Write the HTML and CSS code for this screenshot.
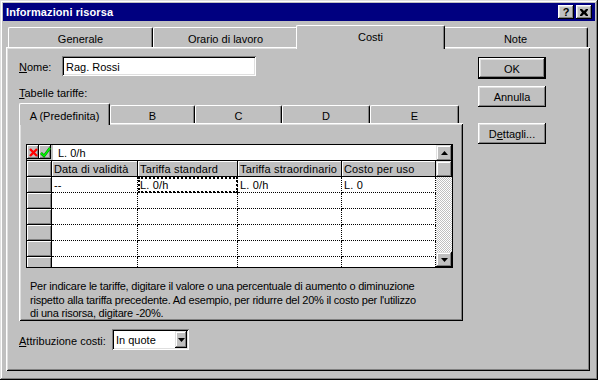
FILE: index.html
```html
<!DOCTYPE html>
<html lang="it">
<head>
<meta charset="utf-8">
<title>Informazioni risorsa</title>
<link rel="stylesheet" href="styles.css">
</head>
<body>
<div class="window">
  <div class="titlebar">
    <span class="title">Informazioni risorsa</span>
    <span class="tb-btn tb-help">?</span>
    <span class="tb-btn tb-close">
      <svg width="8" height="7" viewBox="0 0 8 7"><path d="M0 0h2l2 2 2-2h2v1l-2 2.5 2 2.5v1h-2l-2-2-2 2h-2v-1l2-2.5-2-2.5z" fill="#000"/></svg>
    </span>
  </div>

  <div class="main-tabs">
    <div class="tab main-tab">Generale</div>
    <div class="tab main-tab">Orario di lavoro</div>
    <div class="tab main-tab active">Costi</div>
    <div class="tab main-tab">Note</div>
  </div>

  <div class="page">
    <div class="left">
      <div class="name-row">
        <span class="name-label"><u>N</u>ome:</span>
        <div class="textbox">Rag. Rossi</div>
      </div>
      <div class="section-label"><u>T</u>abelle tariffe:</div>

      <div class="inner-tabs">
        <div class="tab itab itab-a active">A (Predefinita)</div>
        <div class="tab itab itab-b">B</div>
        <div class="tab itab itab-c">C</div>
        <div class="tab itab itab-d">D</div>
        <div class="tab itab itab-e">E</div>
      </div>

      <div class="ipanel">
        <div class="grid">
          <div class="gmain">
            <div class="entry-bar">
              <span class="eb-btn">
                <svg width="9" height="9" viewBox="0 0 9 9"><path d="M1 1l7 7M8 1l-7 7" stroke="#ff0000" stroke-width="2.4"/></svg>
              </span>
              <span class="eb-btn">
                <svg width="11" height="11" viewBox="0 0 11 11"><path d="M1 6l3 3 6-8" stroke="#008000" stroke-width="2.6" fill="none"/><path d="M1 6l3 3 6-8" stroke="#00ff00" stroke-width="1.4" fill="none"/></svg>
              </span>
              <div class="entry-input">L. 0/h</div>
            </div>
            <div class="grow ghead">
              <div class="rh corner"></div>
              <div class="hc c1">Data di validità</div>
              <div class="hc c2">Tariffa standard</div>
              <div class="hc c3">Tariffa straordinario</div>
              <div class="hc c4">Costo per uso</div>
            </div>
            <div class="grow">
              <div class="rh"></div>
              <div class="dc c1">--</div>
              <div class="dc c2 focus">L. 0/h</div>
              <div class="dc c3">L. 0/h</div>
              <div class="dc c4">L. 0</div>
            </div>
            <div class="grow"><div class="rh"></div><div class="dc c1"></div><div class="dc c2"></div><div class="dc c3"></div><div class="dc c4"></div></div>
            <div class="grow"><div class="rh"></div><div class="dc c1"></div><div class="dc c2"></div><div class="dc c3"></div><div class="dc c4"></div></div>
            <div class="grow"><div class="rh"></div><div class="dc c1"></div><div class="dc c2"></div><div class="dc c3"></div><div class="dc c4"></div></div>
            <div class="grow"><div class="rh"></div><div class="dc c1"></div><div class="dc c2"></div><div class="dc c3"></div><div class="dc c4"></div></div>
            <div class="grow"><div class="rh"></div><div class="dc c1"></div><div class="dc c2"></div><div class="dc c3"></div><div class="dc c4"></div></div>
          </div>
          <div class="scrollbar">
            <span class="sb-btn sb-up"><svg width="7" height="4" viewBox="0 0 7 4"><path d="M3.5 0L7 4H0z" fill="#000"/></svg></span>
            <span class="sb-thumb"></span>
            <span class="sb-track"></span>
            <span class="sb-btn sb-down"><svg width="7" height="4" viewBox="0 0 7 4"><path d="M0 0h7L3.5 4z" fill="#000"/></svg></span>
          </div>
        </div>
        <p class="help">Per indicare le tariffe, digitare il valore o una percentuale di aumento o diminuzione<br>rispetto alla tariffa precedente. Ad esempio, per ridurre del 20% il costo per l'utilizzo<br>di una risorsa, digitare -20%.</p>
      </div>

      <div class="cost-row">
        <span class="cost-label"><u>A</u>ttribuzione costi:</span>
        <div class="combo">
          <span class="combo-text">In quote</span>
          <span class="combo-btn"><svg width="7" height="4" viewBox="0 0 7 4"><path d="M0 0h7L3.5 4z" fill="#000"/></svg></span>
        </div>
      </div>
    </div>

    <div class="right">
      <div class="btn btn-default">OK</div>
      <div class="btn btn-cancel">Annulla</div>
      <div class="btn btn-details">D<u>e</u>ttagli...</div>
    </div>
  </div>
</div>
</body>
</html>
```

FILE: styles.css
```css
* { box-sizing: border-box; }
html, body { margin: 0; padding: 0; }
body {
  width: 598px;
  height: 380px;
  background: #c0c0c0;
  font-family: "Liberation Sans", Arial, sans-serif;
  font-size: 11px;
  color: #000;
}
u { text-decoration: underline; text-underline-offset: 1px; }

.window {
  width: 598px;
  height: 380px;
  padding: 3px;
  background: #c0c0c0;
  box-shadow: inset -1px -1px #000, inset 1px 1px #dfdfdf, inset -2px -2px #808080, inset 2px 2px #fff;
  display: flex;
  flex-direction: column;
}

/* title bar */
.titlebar {
  height: 18px;
  background: #000080;
  color: #fff;
  display: flex;
  align-items: center;
  padding: 0 3px 0 3px;
}
.title { flex: 1; font-weight: bold; font-size: 11px; letter-spacing: 0.1px; }
.tb-btn {
  width: 16px;
  height: 14px;
  background: #c0c0c0;
  color: #000;
  display: flex;
  align-items: center;
  justify-content: center;
  font-weight: bold;
  font-size: 11px;
  box-shadow: inset -1px -1px #000, inset 1px 1px #fff, inset -2px -2px #808080, inset 2px 2px #dfdfdf;
}
.tb-close { margin-left: 2px; }

/* generic tab */
.tab {
  background: #c0c0c0;
  border-top: 1px solid #fff;
  border-left: 1px solid #fff;
  border-right: 1px solid #000;
  border-radius: 2px 2px 0 0;
  box-shadow: inset -1px 0 #808080;
  display: flex;
  align-items: center;
  justify-content: center;
  white-space: nowrap;
}
.tab.active { position: relative; z-index: 1; }

/* main tabs */
.main-tabs {
  display: flex;
  align-items: flex-end;
  height: 22px;
  margin-top: 4px;
  padding-left: 5px;
}
.main-tab { width: 145px; height: 20px; padding-top: 2px; }
.main-tab.active { width: 149px; height: 24px; margin: 0 -2px -2px; padding-top: 0; padding-bottom: 1px; }

/* page */
.page {
  margin-left: 3px;
  width: 584px;
  height: 324px;
  padding: 9px 0 0 13px;
  display: flex;
  box-shadow: inset 1px 1px #fff, inset -1px -1px #000, inset 2px 2px #dfdfdf, inset -2px -2px #808080;
}
.left { width: 444px; display: flex; flex-direction: column; }
.right { width: 68px; margin-left: 15px; margin-top: 1px; display: flex; flex-direction: column; }

.name-row { display: flex; align-items: center; height: 20px; }
.name-label { width: 43px; padding-top: 1px; }
.textbox {
  width: 194px;
  height: 20px;
  background: #fff;
  padding: 1px 0 0 4px;
  display: flex;
  align-items: center;
  box-shadow: inset 1px 1px #808080, inset -1px -1px #fff, inset 2px 2px #000, inset -2px -2px #dfdfdf;
}
.section-label { margin-top: 11px; line-height: 13px; height: 13px; }

/* inner tabs */
.inner-tabs {
  display: flex;
  align-items: flex-end;
  height: 20px;
  margin-top: 3px;
}
.itab { height: 18px; padding-top: 3px; }
.itab.active { height: 22px; margin-bottom: -2px; padding-top: 2px; padding-bottom: 0; }
.itab-a { width: 91px; }
.itab-b { width: 85px; }
.itab-c { width: 87px; }
.itab-d { width: 88px; }
.itab-e { width: 89px; }

.ipanel {
  height: 198px;
  padding: 21px 0 0 7px;
  box-shadow: inset 1px 1px #fff, inset -1px -1px #000, inset 2px 2px #dfdfdf, inset -2px -2px #808080;
}

/* grid */
.grid {
  width: 427px;
  height: 124px;
  border: 1px solid #000;
  display: flex;
  background: #c0c0c0;
}
.gmain { width: 409px; overflow: hidden; display: flex; flex-direction: column; }
.entry-bar {
  height: 16px;
  flex: none;
  display: flex;
  border-bottom: 1px solid #000;
}
.eb-btn {
  width: 12px;
  height: 14px;
  display: flex;
  align-items: center;
  justify-content: center;
  box-shadow: inset -1px -1px #000, inset 1px 1px #fff, inset -2px -2px #808080;
}
.entry-input {
  flex: 1;
  margin-left: 2px;
  height: 15px;
  background: #fff;
  padding: 2px 0 0 5px;
  line-height: 13px;
}
.grow { display: flex; height: 16px; flex: none; }
.ghead { border-bottom: 1px solid #000; }
.rh {
  width: 25px;
  height: 16px;
  background: #c0c0c0;
  border-right: 1px solid #000;
  border-bottom: 1px solid #000;
  box-shadow: inset 1px 1px #fff, inset -1px -1px #808080;
}
.ghead .rh { height: 15px; border-bottom: none; }
.hc {
  height: 15px;
  line-height: 13px;
  padding: 2px 0 0 2px;
  border-right: 1px solid #000;
  box-shadow: inset 1px 1px #fff;
  white-space: nowrap;
  overflow: hidden;
  letter-spacing: 0.15px;
}
.dc {
  height: 16px;
  line-height: 13px;
  padding: 2px 0 0 2px;
  background: #fff;
  border-right: 1px dotted #000;
  border-bottom: 1px dotted #000;
  white-space: nowrap;
  letter-spacing: 0.15px;
}
.c1 { width: 86px; }
.c2 { width: 100px; }
.c3 { width: 104px; }
.c4 { width: 94px; }
.dc.focus { outline: 2px dotted #000; outline-offset: -2px; }

.scrollbar { width: 16px; display: flex; flex-direction: column; }
.sb-btn, .sb-thumb {
  width: 16px;
  height: 16px;
  flex: none;
  background: #c0c0c0;
  display: flex;
  align-items: center;
  justify-content: center;
  box-shadow: inset -1px -1px #000, inset 1px 1px #dfdfdf, inset -2px -2px #808080, inset 2px 2px #fff;
}
.sb-down { height: 15px; }
.sb-track {
  flex: 1;
  background: repeating-conic-gradient(#c0c0c0 0 25%, #fff 0 50%) 0 0 / 2px 2px;
}

.help {
  margin: 12px 0 0 4px;
  width: 430px;
  line-height: 13.5px;
  letter-spacing: -0.22px;
  white-space: nowrap;
}

/* cost row */
.cost-row { display: flex; align-items: center; margin-top: 8px; height: 21px; }
.cost-label { width: 93px; padding-top: 2px; }
.combo {
  width: 77px;
  height: 21px;
  background: #fff;
  display: flex;
  align-items: center;
  padding: 2px 2px 2px 4px;
  box-shadow: inset 1px 1px #808080, inset -1px -1px #fff, inset 2px 2px #000, inset -2px -2px #dfdfdf;
}
.combo-text { flex: 1; padding-top: 1px; }
.combo-btn {
  width: 12px;
  height: 17px;
  background: #c0c0c0;
  display: flex;
  align-items: center;
  justify-content: center;
  box-shadow: inset -1px -1px #000, inset 1px 1px #dfdfdf, inset -2px -2px #808080, inset 2px 2px #fff;
}

/* buttons */
.btn {
  width: 68px;
  height: 21px;
  display: flex;
  align-items: center;
  justify-content: center;
  padding-top: 1px;
  background: #c0c0c0;
  box-shadow: inset -1px -1px #000, inset 1px 1px #fff, inset -2px -2px #808080, inset 2px 2px #dfdfdf;
}
.btn-default { height: 22px; border: 1px solid #000; }
.btn-cancel { margin-top: 7px; }
.btn-details { margin-top: 16px; }
```
